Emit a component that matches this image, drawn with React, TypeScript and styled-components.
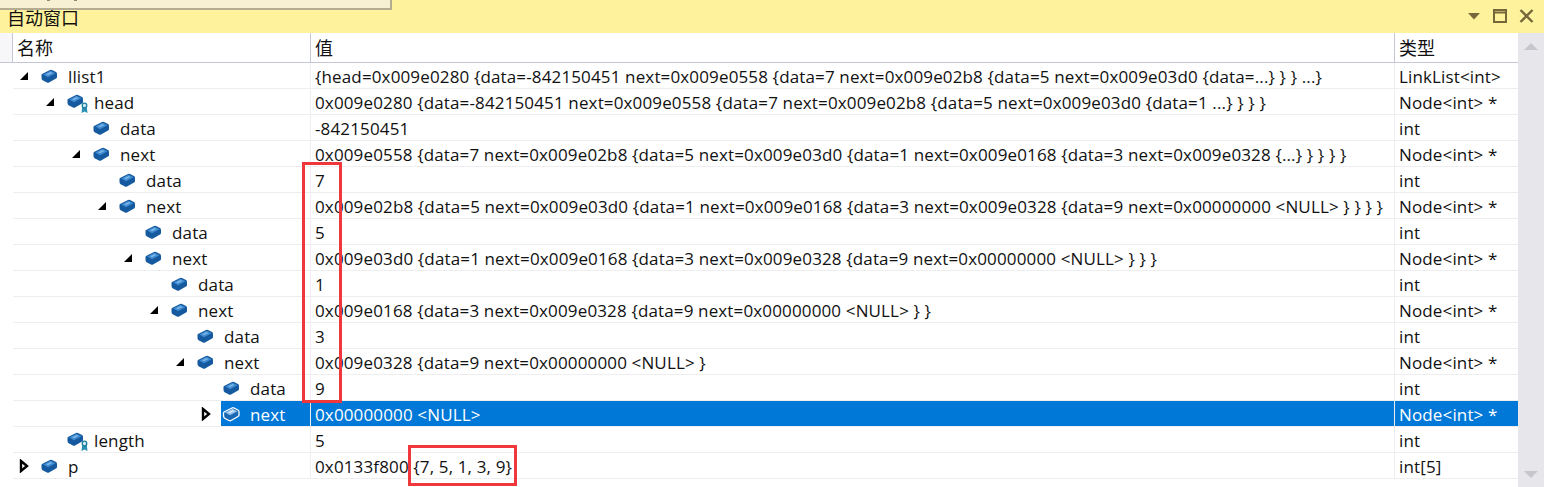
import React from "react";
import styled, { createGlobalStyle } from "styled-components";

type Row = {
  name: string;
  value: string;
  type: string;
  depth: number;
  arrow?: "open" | "closed";
  member?: boolean;
  selected?: boolean;
};

const rows: Row[] = [
  { name: "llist1", depth: 0, arrow: "open", type: "LinkList<int>", value: "{head=0x009e0280 {data=-842150451 next=0x009e0558 {data=7 next=0x009e02b8 {data=5 next=0x009e03d0 {data=...} } } ...}" },
  { name: "head", depth: 1, arrow: "open", member: true, type: "Node<int> *", value: "0x009e0280 {data=-842150451 next=0x009e0558 {data=7 next=0x009e02b8 {data=5 next=0x009e03d0 {data=1 ...} } } }" },
  { name: "data", depth: 2, type: "int", value: "-842150451" },
  { name: "next", depth: 2, arrow: "open", type: "Node<int> *", value: "0x009e0558 {data=7 next=0x009e02b8 {data=5 next=0x009e03d0 {data=1 next=0x009e0168 {data=3 next=0x009e0328 {...} } } } }" },
  { name: "data", depth: 3, type: "int", value: "7" },
  { name: "next", depth: 3, arrow: "open", type: "Node<int> *", value: "0x009e02b8 {data=5 next=0x009e03d0 {data=1 next=0x009e0168 {data=3 next=0x009e0328 {data=9 next=0x00000000 <NULL> } } } }" },
  { name: "data", depth: 4, type: "int", value: "5" },
  { name: "next", depth: 4, arrow: "open", type: "Node<int> *", value: "0x009e03d0 {data=1 next=0x009e0168 {data=3 next=0x009e0328 {data=9 next=0x00000000 <NULL> } } }" },
  { name: "data", depth: 5, type: "int", value: "1" },
  { name: "next", depth: 5, arrow: "open", type: "Node<int> *", value: "0x009e0168 {data=3 next=0x009e0328 {data=9 next=0x00000000 <NULL> } }" },
  { name: "data", depth: 6, type: "int", value: "3" },
  { name: "next", depth: 6, arrow: "open", type: "Node<int> *", value: "0x009e0328 {data=9 next=0x00000000 <NULL> }" },
  { name: "data", depth: 7, type: "int", value: "9" },
  { name: "next", depth: 7, arrow: "closed", selected: true, type: "Node<int> *", value: "0x00000000 <NULL>" },
  { name: "length", depth: 1, member: true, type: "int", value: "5" },
  { name: "p", depth: 0, arrow: "closed", type: "int[5]", value: "0x0133f800 {7, 5, 1, 3, 9}" },
];

const Cube = ({ member, selected }: { member?: boolean; selected?: boolean }) => (
  <CubeBox viewBox="0 0 22 18" width="22" height="18" $member={member}>
    <path
      d="M3 7 11 3Q12 2.500 13 3L17 5Q18 5.500 18 7V10Q18 11 17 11.500L10 15.500Q9 16 8 15.500L4 13.500Q2.500 12.500 2.500 11V8Q2.500 7.300 3 7z"
      fill={selected ? "#1a68b4" : "#15599f"}
      stroke={selected ? "#ffffff" : "none"}
      strokeWidth="1.300"
    />
    <path d="M4.200 7.400 11.500 3.800 16.500 6.300 9 10.200z" fill={selected ? "#8fc1ea" : "#3f8bd0"} />
    <path d="M7 7.200 11.500 5 13.500 6 9 8.300z" fill={selected ? "#d5e8f8" : "#7db4e6"} />
    {member && (
      <>
        <path d="M17.200 15 16.500 21 19.500 19.500 22.500 21 21.800 15z" fill="#2a8fb0" />
        <circle cx="19.500" cy="13.500" r="2.300" fill="#cfeaf2" stroke="#1c7f9c" strokeWidth="1.300" />
      </>
    )}
  </CubeBox>
);

export default function App() {
  return (
    <Window>
      <GlobalStyle />
      <TitleBar>
        <TitleText>自动窗口</TitleText>
        <WindowButtons>
          <svg width="14" height="8" viewBox="0 0 14 8"><path d="M1 1h12L7 7.500z" fill="#75673a" /></svg>
          <svg width="14" height="14" viewBox="0 0 14 14"><path d="M1 1h12v12H1zM1 3.500h12" fill="none" stroke="#75673a" strokeWidth="2" /></svg>
          <svg width="15" height="14" viewBox="0 0 15 14"><path d="M1.500 1l12 12M13.500 1l-12 12" fill="none" stroke="#75673a" strokeWidth="2.400" /></svg>
        </WindowButtons>
      </TitleBar>
      <TipEdge>
        <TipMark />
        <TipMark />
      </TipEdge>
      <Body>
        <Grid>
          <HeaderRow>
            <HeaderGutter />
            <HeaderCell>名称</HeaderCell>
            <HeaderCell>值</HeaderCell>
            <HeaderCell>类型</HeaderCell>
          </HeaderRow>
          {rows.map((row, i) => (
            <DataRow key={i}>
              <NameCell>
                <NameInner $depth={row.depth}>
                  <ArrowSlot>
                    {row.arrow === "open" && (
                      <svg width="10" height="10" viewBox="0 0 10 10"><path d="M9 1v8H1z" fill="#000" /></svg>
                    )}
                    {row.arrow === "closed" && (
                      <svg width="10" height="14" viewBox="0 0 10 14"><path d="M2 2l6 5-6 5z" fill="#fff" stroke="#000" strokeWidth="2.400" /></svg>
                    )}
                  </ArrowSlot>
                  <NamePart $selected={row.selected}>
                    <Cube member={row.member} selected={row.selected} />
                    <NameText>{row.name}</NameText>
                  </NamePart>
                </NameInner>
              </NameCell>
              <ValueCell $selected={row.selected}>{row.value}</ValueCell>
              <TypeCell $selected={row.selected}>{row.type}</TypeCell>
            </DataRow>
          ))}
        </Grid>
        <ScrollBar>
          <ScrollArrow $up />
          <ScrollArrow />
        </ScrollBar>
        <ColumnMark />
        <ArrayMark />
      </Body>
    </Window>
  );
}

const GlobalStyle = createGlobalStyle`
  html, body { margin: 0; padding: 0; background: #fff; overflow: hidden; }
`;

const Window = styled.div`
  position: relative;
  width: 1544px;
  height: 487px;
  overflow: hidden;
  display: flex;
  flex-direction: column;
  font-family: "Open Sans", "Noto Sans CJK SC", sans-serif;
  font-size: 17px;
  letter-spacing: 0.14px;
  color: #111;
  background: #fff;
`;

const TitleBar = styled.div`
  height: 33px;
  flex: none;
  background: #fff29d;
  display: flex;
  align-items: center;
  justify-content: space-between;
  padding: 0 10px 0 7px;
  box-sizing: border-box;
`;

const TitleText = styled.span`
  font-family: "Noto Sans CJK SC", sans-serif;
  font-size: 18px;
  letter-spacing: 0;
`;

const WindowButtons = styled.div`
  display: flex;
  align-items: center;
  gap: 12px;
  margin-bottom: 1px;
`;

const TipEdge = styled.div`
  position: absolute;
  top: 0;
  left: 0;
  width: 390px;
  height: 8px;
  display: flex;
  align-items: flex-start;
  gap: 24px;
  padding-left: 47px;
  box-sizing: content-box;
  width: 343px;
  background: #f7f0d2;
  border-right: 2px solid #b3ac90;
  border-bottom: 2px solid #b3ac90;
`;

const TipMark = styled.span`
  width: 3px;
  height: 1px;
  background: #8d8a78;
`;

const Body = styled.div`
  flex: 1;
  display: flex;
  position: relative;
`;

const Grid = styled.div`
  width: 1518px;
  display: flex;
  flex-direction: column;
`;

const HeaderRow = styled.div`
  height: 30px;
  flex: none;
  display: grid;
  grid-template-columns: 13px 298px 1084px 1fr;
  box-sizing: border-box;
  border-bottom: 1px solid #c5c7d6;
`;

const HeaderGutter = styled.div`
  border-right: 1px solid #c5c7d6;
  background: #f7f7f9;
`;

const HeaderCell = styled.div`
  font-family: "Noto Sans CJK SC", sans-serif;
  font-size: 18px;
  letter-spacing: 0;
  padding-left: 4px;
  line-height: 29px;
  border-right: 1px solid #c5c7d6;
  &:last-child { border-right: 0; }
`;

const DataRow = styled.div`
  height: 26px;
  flex: none;
  margin-left: 13px;
  display: grid;
  grid-template-columns: 298px 1084px 1fr;
  box-sizing: border-box;
  border-bottom: 1px solid #eeeef0;
  line-height: 28px;
  white-space: nowrap;
`;

const NameCell = styled.div`
  border-right: 1px solid #eeeef0;
  height: 25px;
  box-sizing: border-box;
`;

const NameInner = styled.div<{ $depth: number }>`
  display: flex;
  height: 25px;
  padding-left: ${(p) => 4 + p.$depth * 26}px;
`;

const ArrowSlot = styled.span`
  width: 14px;
  margin-right: 8px;
  height: 25px;
  flex: none;
  display: flex;
  align-items: center;
  justify-content: center;
`;

const NamePart = styled.div<{ $selected?: boolean }>`
  flex: 1;
  display: flex;
  align-items: flex-start;
  height: 25px;
  background: ${(p) => (p.$selected ? "#0078d7" : "transparent")};
  color: ${(p) => (p.$selected ? "#fff" : "inherit")};
`;

const CubeBox = styled.svg<{ $member?: boolean }>`
  flex: none;
  overflow: visible;
  margin: ${(p) => (p.$member ? "3px" : "4px")} 7px 0 0;
`;

const NameText = styled.span`
  display: block;
`;

const ValueCell = styled.div<{ $selected?: boolean }>`
  padding-left: 4px;
  height: 25px;
  box-sizing: border-box;
  border-right: 1px solid #eeeef0;
  background: ${(p) => (p.$selected ? "#0078d7" : "transparent")};
  color: ${(p) => (p.$selected ? "#fff" : "inherit")};
`;

const TypeCell = styled(ValueCell)`
  border-right: 0;
`;

const ScrollBar = styled.div`
  flex: 1;
  background: #e6e6eb;
  display: flex;
  flex-direction: column;
  justify-content: space-between;
  align-items: center;
  padding: 10px 0 9px;
`;

const ScrollArrow = styled.span<{ $up?: boolean }>`
  width: 0;
  height: 0;
  border-left: 7px solid transparent;
  border-right: 7px solid transparent;
  border-bottom: ${(p) => (p.$up ? "7px solid #c6c6cc" : "0")};
  border-top: ${(p) => (p.$up ? "0" : "7px solid #c6c6cc")};
`;

const ColumnMark = styled.div`
  position: absolute;
  left: 302px;
  top: 129px;
  width: 40px;
  height: 241px;
  box-sizing: border-box;
  border: 3px solid #f0383c;
`;

const ArrayMark = styled.div`
  position: absolute;
  left: 408px;
  top: 412px;
  width: 109px;
  height: 41px;
  box-sizing: border-box;
  border: 3px solid #f0383c;
`;
